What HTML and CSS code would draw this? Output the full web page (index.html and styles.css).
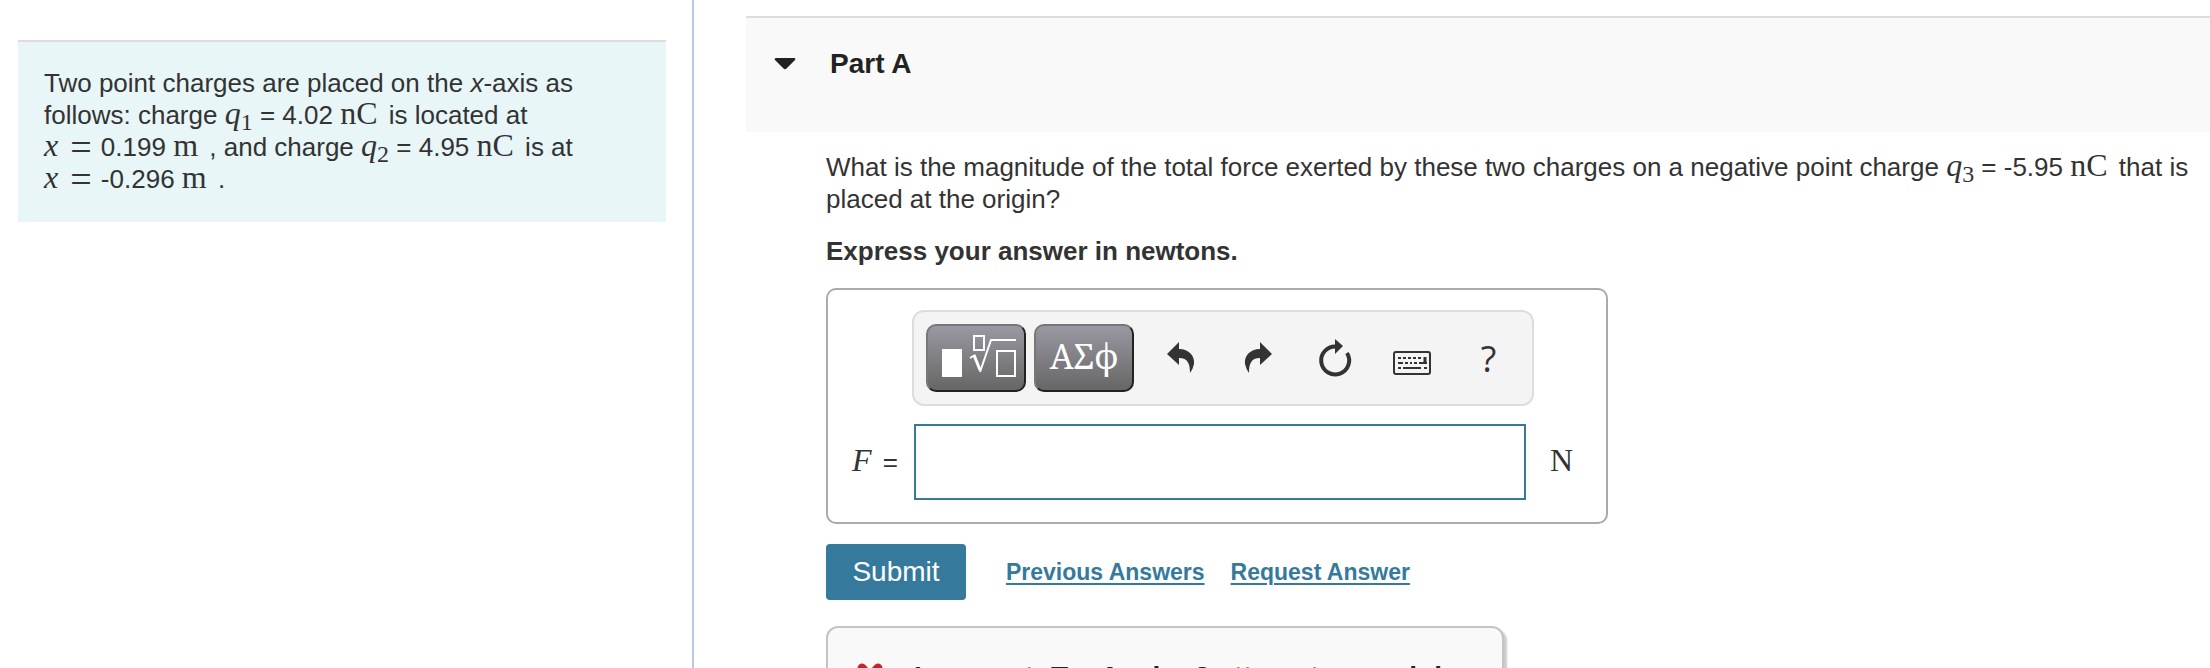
FILE: index.html
```html
<!DOCTYPE html>
<html lang="en">
  <head>
    <meta charset="UTF-8" />
    <meta name="viewport" content="width=device-width, initial-scale=1.0" />
    <title>Part A</title>
    <link rel="stylesheet" href="styles.css">
  </head>
  <body>
    <div class="layout">
      <aside class="sidebar">
        <p class="intro">
          Two point charges are placed on the <em>x</em>-axis as follows: charge
          <span class="math"><i>q</i><sub>1</sub></span> = 4.02
          <span class="math unit">nC</span> is located at
          <span class="nowrap"><span class="math"><i class="var">x</i> <span class="eq">=</span></span> 0.199
          <span class="math unit">m</span> ,</span> and charge
          <span class="math"><i>q</i><sub>2</sub></span> = 4.95
          <span class="math unit">nC</span> is at
          <span class="nowrap"><span class="math"><i class="var">x</i> <span class="eq">=</span></span> -0.296
          <span class="math unit">m</span> .</span>
        </p>
      </aside>
      <main class="content">
        <header class="part-header">
          <button class="toggle" aria-label="Collapse Part A">
            <svg width="22" height="12" viewBox="0 0 22 12">
              <path d="M2 0h18q2 0 1 2l-8.500 8.500q-1.500 1.500-3 0L1 2q-1-2 1-2z" fill="#222" />
            </svg>
          </button>
          <h2>Part A</h2>
        </header>
        <div class="part-body">
          <p class="question">
            What is the magnitude of the total force exerted by these two charges
            on a negative point charge
            <span class="math"><i>q</i><sub>3</sub></span> = -5.95
            <span class="math unit">nC</span> that is placed at the origin?
          </p>
          <p class="instructions">Express your answer in newtons.</p>
          <form id="answer_form">
            <div class="answer-box">
              <div class="toolbar">
                <button type="button" class="palette" aria-label="Templates">
                  <svg width="80" height="46" viewBox="0 0 80 46" fill="none" stroke="#fff">
                    <path d="M6 16h20v28H6z" fill="#fff" stroke="none" />
                    <path d="M38 3h10v14H38z" stroke-width="2" />
                    <path d="M61 18h18v25H61z" stroke-width="2" />
                    <path d="M34 25l5-3" stroke-width="2" />
                    <path d="M38 22l6 15" stroke-width="3" />
                    <path d="M44 39l11-32h25" stroke-width="2" />
                  </svg>
                </button>
                <button type="button" class="palette" aria-label="Greek letters">ΑΣϕ</button>
                <button type="button" class="tool" aria-label="Undo">
                  <svg width="28" height="32" viewBox="0 0 28 32">
                    <path d="M12 0v7c10 0 16 7 15 15q-1 5-4 9c0-9-2-15-11-15v7L0 12z" fill="#333" />
                  </svg>
                </button>
                <button type="button" class="tool" aria-label="Redo">
                  <svg width="28" height="32" viewBox="0 0 28 32">
                    <path d="M16 0v7C6 7 0 14 1 22q1 5 4 9c0-9 2-15 11-15v7l12-11z" fill="#333" />
                  </svg>
                </button>
                <button type="button" class="tool" aria-label="Reset">
                  <svg width="32" height="38" viewBox="0 0 32 38">
                    <path d="M17 7.500A14 14 0 1 0 28 14" fill="none" stroke="#333" stroke-width="4" />
                    <path d="M16 0l8 7-8 8z" fill="#333" />
                  </svg>
                </button>
                <button type="button" class="tool" aria-label="Keyboard shortcuts">
                  <svg class="keyboard" width="38" height="24" viewBox="0 0 38 24" fill="none" stroke="#333">
                    <rect x="1" y="1" width="36" height="22" rx="2" stroke-width="2" />
                    <path d="M5 7h23" stroke-width="2" stroke-dasharray="3 2" />
                    <path d="M5 12h5M12 12h3M17 12h2M21 12h3M26 12h3M29 12h5" stroke-width="2" />
                    <path d="M32 6v7" stroke-width="3" />
                    <path d="M5 17h3M10 17h18M31 17h3" stroke-width="2" />
                  </svg>
                </button>
                <button type="button" class="tool help" aria-label="Help">?</button>
              </div>
              <div class="answer-row">
                <label for="answer"><span class="math"><i class="symbol">F</i></span> =</label>
                <input type="text" id="answer" name="answer" autocomplete="off" />
                <span class="math newtons">N</span>
              </div>
            </div>
            <div class="actions">
              <button type="submit" class="submit">Submit</button>
              <a href="#previous">Previous Answers</a>
              <a href="#request">Request Answer</a>
            </div>
          </form>
          <div class="feedback">
            <svg width="28" height="28" viewBox="0 0 28 28">
              <path d="M6 5l16 18M22 5L6 23" stroke="#cc2229" stroke-width="9" stroke-linecap="round" />
            </svg>
            <strong>Incorrect; Try Again; 8 attempts remaining</strong>
          </div>
        </div>
      </main>
    </div>
  </body>
</html>
```
FILE: styles.css
```css
* {
  box-sizing: border-box;
}

body {
  margin: 0;
  font-family: "Liberation Sans", Arial, sans-serif;
  font-size: 26px;
  line-height: 32px;
  color: #333;
  background-color: #fff;
}

p,
h2 {
  margin: 0;
}

button {
  font-family: inherit;
  cursor: pointer;
}

svg {
  display: block;
  flex-shrink: 0;
  overflow: visible;
}

.layout {
  display: flex;
  height: 100vh;
  overflow: hidden;
}

.sidebar {
  flex: 0 0 694px;
  padding: 40px 26px 0 18px;
  border-right: 2px solid #b9c8de;
}

.intro {
  padding: 25px 72px 27px 26px;
  border-top: 2px solid #ddd;
  background-color: #e8f6f7;
}

.math {
  font-family: "Liberation Serif", "Times New Roman", serif;
  font-size: 32px;
  line-height: 24px;
}

.math sub {
  font-size: 24px;
  line-height: 0;
  vertical-align: -6px;
}

.math .var {
  margin-right: 4px;
}

.math .eq {
  margin-right: 2px;
  font-size: 38px;
  line-height: 0;
  vertical-align: -4px;
}

.math.unit {
  margin-right: 4px;
}

.math .symbol {
  margin-right: 4px;
}

.nowrap {
  white-space: nowrap;
}

.content {
  flex: 1;
  min-width: 0;
  padding: 16px 0 0 52px;
}

.part-header {
  display: flex;
  align-items: flex-start;
  gap: 34px;
  height: 116px;
  padding: 30px 28px;
  border-top: 2px solid #ddd;
  background-color: #f9f9f9;
}

.part-header h2 {
  font-size: 28px;
  line-height: 32px;
  color: #222;
}

.toggle {
  padding: 10px 0;
  border: none;
  background: none;
}

.part-body {
  padding: 19px 16px 0 80px;
}

.instructions {
  margin-top: 20px;
  font-weight: bold;
}

.answer-box {
  width: 782px;
  margin-top: 21px;
  padding: 20px 24px 22px 24px;
  border: 2px solid #aaa;
  border-radius: 10px;
}

.toolbar {
  display: flex;
  align-items: center;
  width: 622px;
  height: 96px;
  margin-left: 60px;
  padding-left: 12px;
  border: 2px solid #ddd;
  border-radius: 12px;
  background-color: #f4f4f4;
}

.palette {
  display: flex;
  flex-shrink: 0;
  align-items: center;
  justify-content: center;
  width: 100px;
  height: 68px;
  margin-right: 8px;
  padding: 0 0 4px;
  border: 2px solid;
  border-color: #777 #222 #222 #777;
  border-radius: 10px;
  background: linear-gradient(#9a98a2, #666);
  color: #fff;
  font-family: "Noto Serif", "Liberation Serif", serif;
  font-size: 34px;
}

.tool {
  display: flex;
  flex-shrink: 0;
  align-items: center;
  justify-content: center;
  width: 77px;
  height: 68px;
  padding: 0;
  border: none;
  background: none;
  color: #333;
}

.keyboard {
  margin-top: 10px;
}

.help {
  font-family: "Open Sans", sans-serif;
  font-size: 36px;
}

.answer-row {
  display: flex;
  align-items: center;
  margin-top: 18px;
}

.answer-row label {
  flex: 0 0 62px;
}

.answer-row input {
  flex: 0 0 612px;
  height: 76px;
  margin-right: 24px;
  padding: 0 12px;
  border: 2px solid #357a9c;
  font-size: 28px;
  outline: none;
}

.newtons {
  padding-bottom: 4px;
}

.actions {
  display: flex;
  align-items: center;
  margin-top: 20px;
}

.submit {
  width: 140px;
  height: 56px;
  margin-right: 40px;
  border: none;
  border-radius: 4px;
  background-color: #357a9c;
  color: #fff;
  font-size: 28px;
}

.actions a {
  margin-right: 26px;
  color: #357a9c;
  font-size: 23px;
  font-weight: bold;
  text-decoration-thickness: 2px;
  text-underline-offset: 3px;
}

.feedback {
  display: flex;
  align-items: center;
  gap: 30px;
  width: 678px;
  margin-top: 26px;
  padding: 33px 0 32px 28px;
  border: 2px solid #c4c4c4;
  border-radius: 12px;
  background-color: #f9f9f9;
  box-shadow: 3px 3px 2px #ccc;
  color: #222;
  font-size: 28px;
  white-space: nowrap;
}
```
